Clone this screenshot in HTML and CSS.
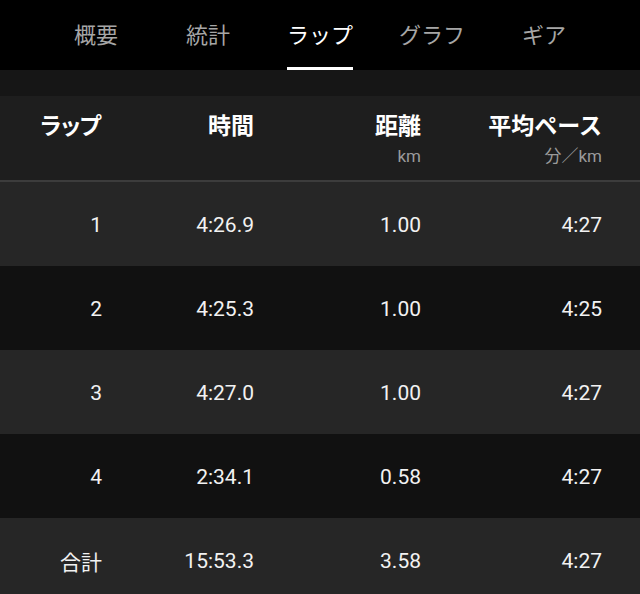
FILE: index.html
```html
<!DOCTYPE html>
<html lang="ja">
<head>
<meta charset="utf-8">
<link rel="stylesheet" href="styles.css">
</head>
<body>
<nav class="tabs">
  <div class="tab"><span>概要</span></div>
  <div class="tab"><span>統計</span></div>
  <div class="tab active"><span>ラップ</span></div>
  <div class="tab"><span>グラフ</span></div>
  <div class="tab"><span>ギア</span></div>
</nav>
<div class="gap"></div>
<div class="table">
  <div class="row head">
    <div class="cell"><div class="ht tight">ラップ</div></div>
    <div class="cell"><div class="ht">時間</div></div>
    <div class="cell"><div class="ht">距離</div><div class="unit">km</div></div>
    <div class="cell"><div class="ht">平均ペース</div><div class="unit">分／km</div></div>
  </div>
  <div class="row light">
    <div class="cell">1</div><div class="cell">4:26.9</div><div class="cell">1.00</div><div class="cell">4:27</div>
  </div>
  <div class="row dark">
    <div class="cell">2</div><div class="cell">4:25.3</div><div class="cell">1.00</div><div class="cell">4:25</div>
  </div>
  <div class="row light">
    <div class="cell">3</div><div class="cell">4:27.0</div><div class="cell">1.00</div><div class="cell">4:27</div>
  </div>
  <div class="row dark">
    <div class="cell">4</div><div class="cell">2:34.1</div><div class="cell">0.58</div><div class="cell">4:27</div>
  </div>
  <div class="row light">
    <div class="cell jp">合計</div><div class="cell">15:53.3</div><div class="cell">3.58</div><div class="cell">4:27</div>
  </div>
</div>
</body>
</html>
```
FILE: styles.css
```css
html, body {
  margin: 0;
  padding: 0;
  background: #262626;
  font-family: Roboto, "Noto Sans CJK JP", sans-serif;
  color: #f2f2f2;
}
.tabs {
  display: flex;
  height: 70px;
  padding: 0 40px;
  background: #000;
}
.tab {
  flex: 1;
  display: flex;
  justify-content: center;
}
.tab span {
  display: block;
  font-family: "Noto Sans CJK JP", sans-serif;
  font-size: 22px;
  line-height: 66px;
  height: 67px;
  color: #a6a6a6;
  border-bottom: 3px solid transparent;
}
.tab.active span {
  color: #fff;
  border-bottom-color: #fff;
}
.gap {
  height: 26px;
  background: #161616;
}
.row {
  display: grid;
  grid-template-columns: 102px 152px 167px 181px;
  height: 84px;
  align-items: center;
}
.head {
  background: #1e1e1e;
  height: 84px;
  border-bottom: 2px solid #3c3c3c;
  align-items: start;
}
.cell {
  text-align: right;
  font-size: 21px;
  padding-top: 2px;
}
.head .cell {
  padding-top: 0;
}
.jp {
  font-family: "Noto Sans CJK JP", sans-serif;
}
.ht {
  font-family: "Noto Sans CJK JP", sans-serif;
  font-weight: 700;
  font-size: 23px;
  line-height: 30px;
  margin-top: 13px;
  color: #fff;
}
.ht.tight {
  letter-spacing: -3px;
  padding-right: 3px;
}
.unit {
  font-family: Roboto, "Noto Sans CJK JP", sans-serif;
  font-size: 17px;
  line-height: 20px;
  color: #9a9a9a;
  margin-top: 7px;
}
.light { background: #262626; }
.dark { background: #111111; }
```
